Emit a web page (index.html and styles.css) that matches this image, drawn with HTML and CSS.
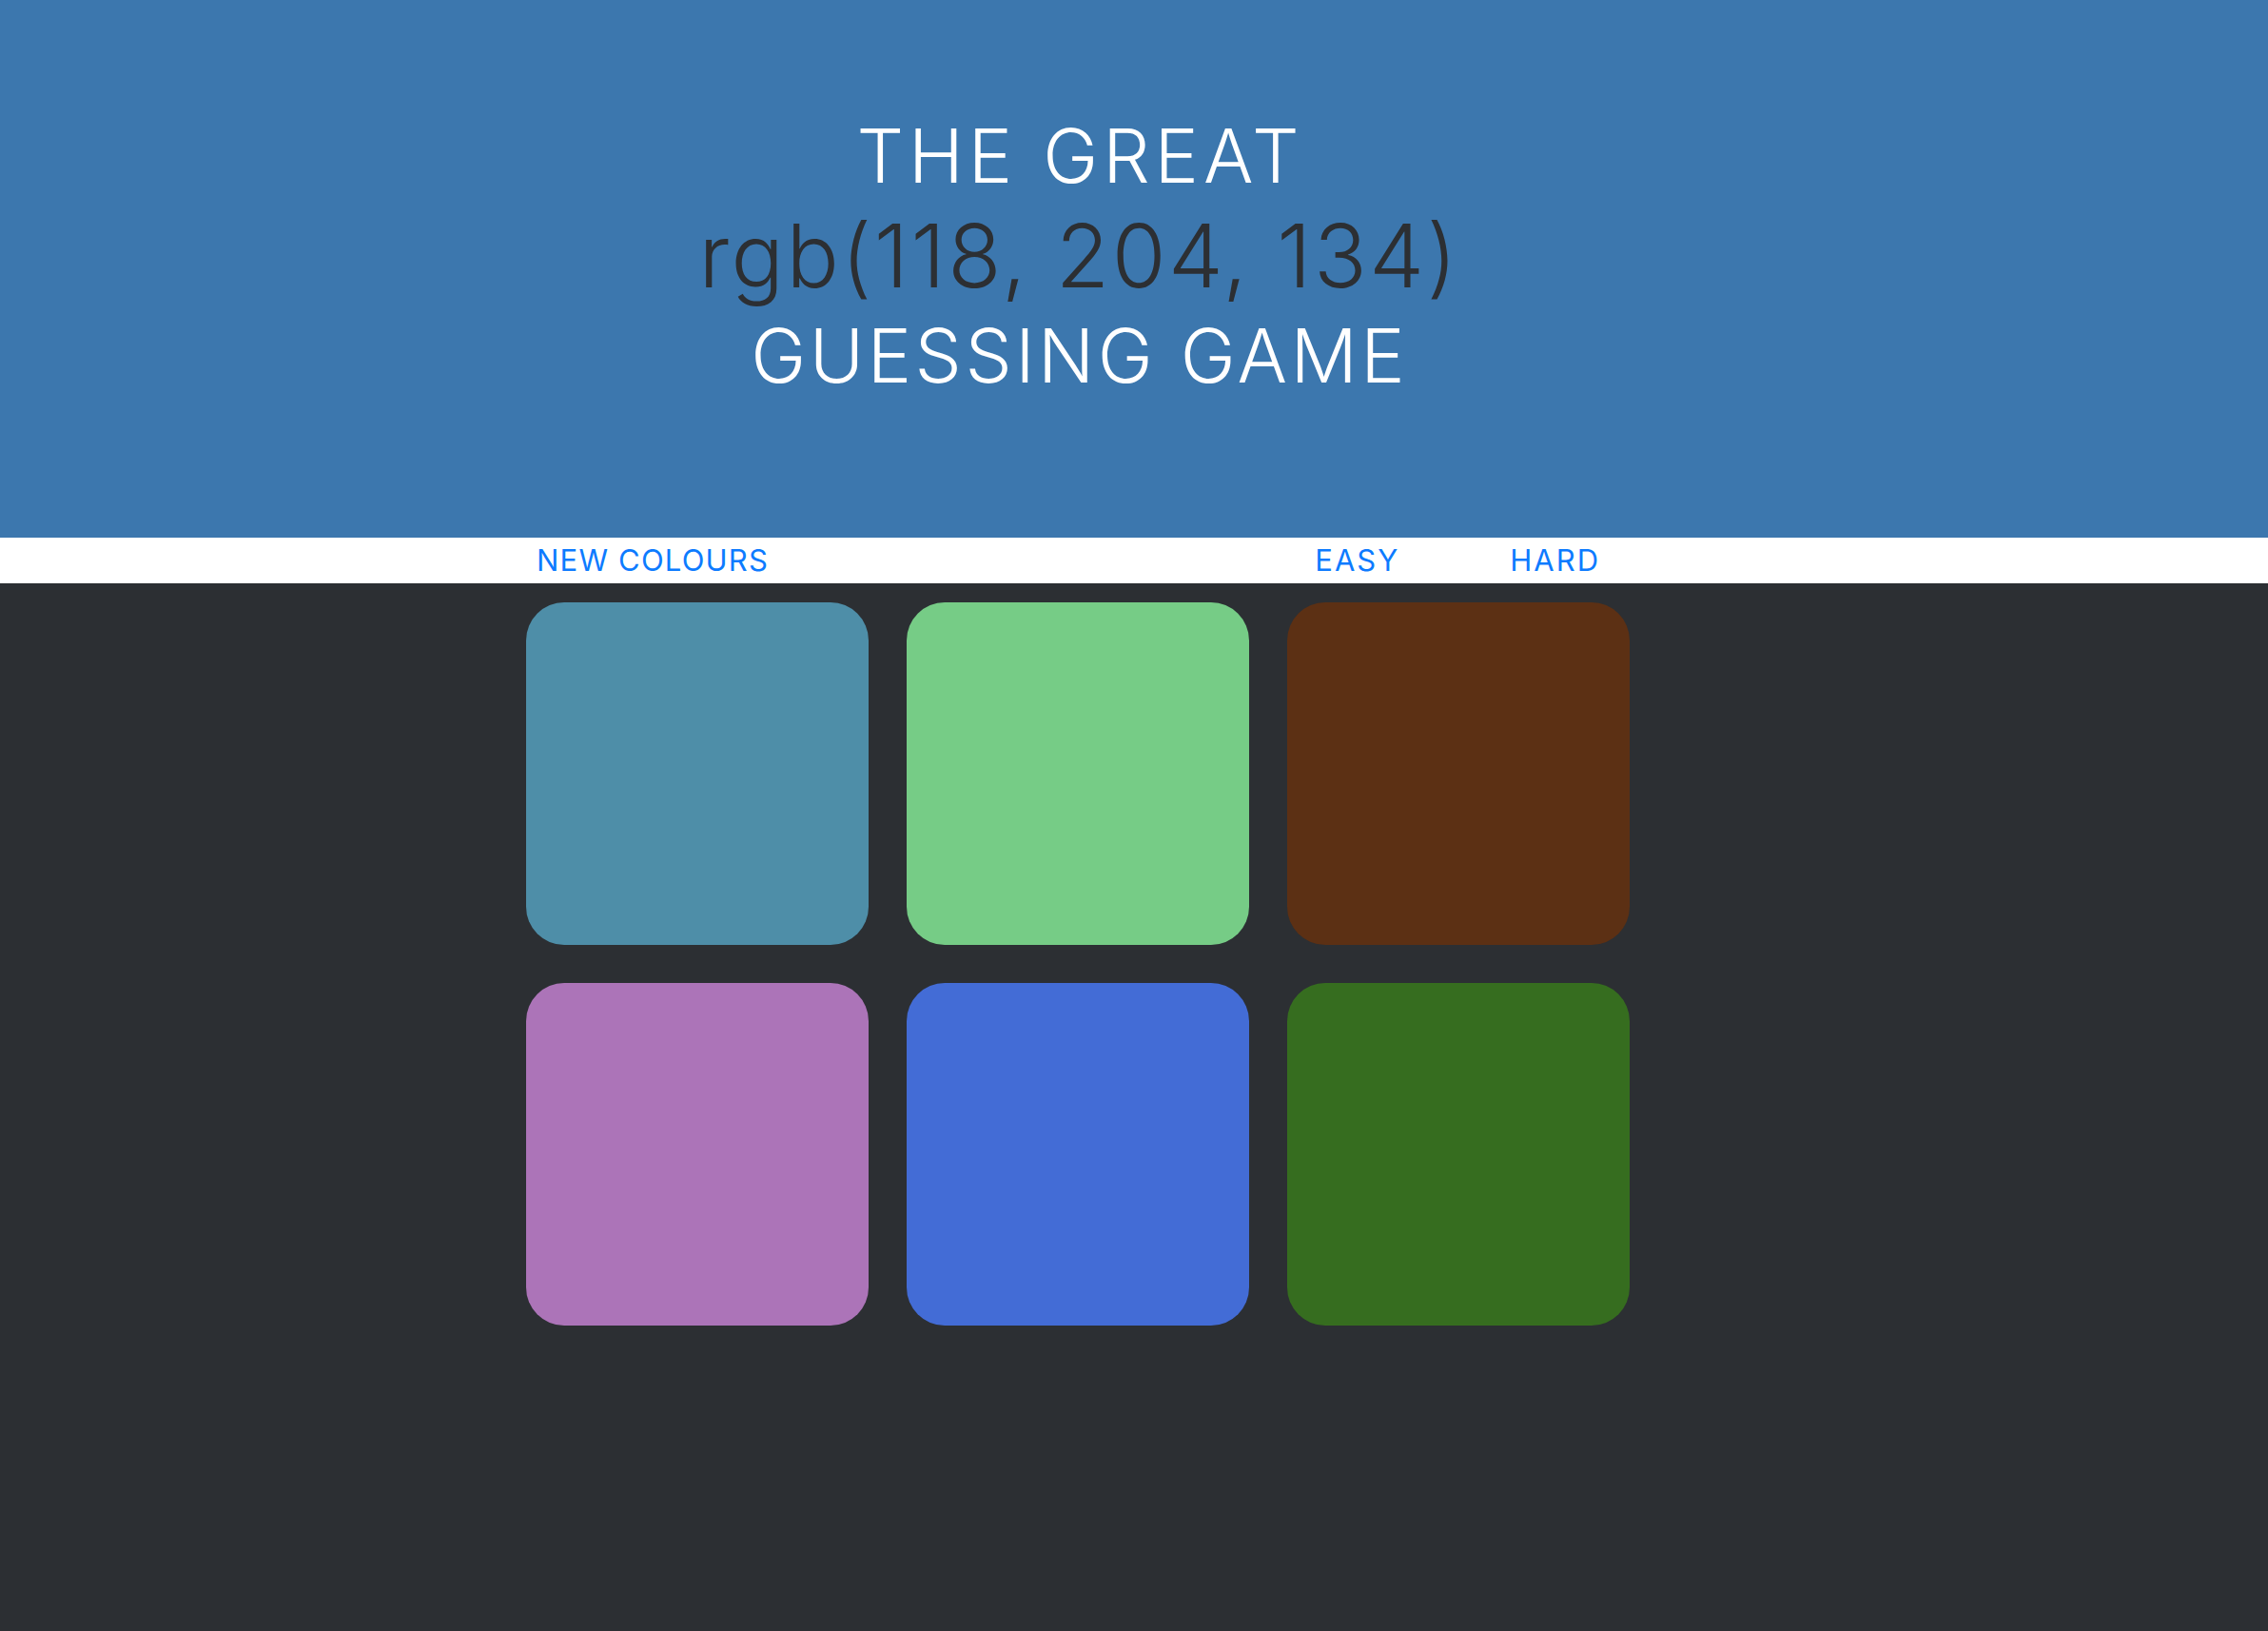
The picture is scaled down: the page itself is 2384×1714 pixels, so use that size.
FILE: index.html
```html
<!DOCTYPE html>
<html lang="en">
<head>
<meta charset="utf-8">
<title>The Great RGB Guessing Game</title>
<link rel="stylesheet" href="styles.css">
</head>
<body>
<div class="page">
  <header class="banner">
    <h1 class="title">
      <span class="title-line title-top">THE GREAT</span>
      <span class="title-rgb">rgb(118, 204, 134)</span>
      <span class="title-line title-bottom">GUESSING GAME</span>
    </h1>
  </header>
  <nav class="bar">
    <div class="bar-inner">
      <button class="bar-btn bar-btn-new">NEW COLOURS</button>
      <span class="bar-message"></span>
      <button class="bar-btn">EASY</button>
      <button class="bar-btn bar-btn-hard">HARD</button>
    </div>
  </nav>
  <main class="board">
    <div class="grid">
      <div class="square sq-1"></div>
      <div class="square sq-2"></div>
      <div class="square sq-3"></div>
      <div class="square sq-4"></div>
      <div class="square sq-5"></div>
      <div class="square sq-6"></div>
    </div>
  </main>
</div>
</body>
</html>
```
FILE: styles.css
```css
html, body {
  margin: 0;
  padding: 0;
  background: #2c2f33;
}
body {
  font-family: Inter, "Noto Sans", "Liberation Sans", sans-serif;
  font-weight: 300;
  min-height: 1714px;
}
.page {
  min-height: 1714px;
}
.banner {
  background: #3c77ae;
  height: 565px;
  box-sizing: border-box;
  padding-top: 112px;
  padding-right: 118px;
}
.title {
  margin: 0;
  font-weight: 300;
  text-align: center;
  display: flex;
  flex-direction: column;
  align-items: center;
}
.title-line {
  color: #ffffff;
  font-size: 78px;
  line-height: 104px;
}
.title-top {
  letter-spacing: 5px;
  padding-left: 5px;
}
.title-bottom {
  letter-spacing: 3.5px;
  padding-left: 3.5px;
}
.title-rgb {
  color: #2c2f33;
  font-size: 92px;
  line-height: 106px;
  letter-spacing: 2.5px;
  padding-left: 2.5px;
}
.bar {
  background: #ffffff;
  height: 48px;
  padding-right: 118px;
}
.bar-inner {
  width: 1198px;
  margin: 0 auto;
  box-sizing: border-box;
  height: 48px;
  display: flex;
  align-items: center;
  padding-left: 30px;
  padding-right: 50px;
}
.bar-btn {
  background: none;
  border: 0;
  padding: 0;
  margin: 0;
  font-family: inherit;
  font-weight: 400;
  font-size: 31px;
  line-height: 48px;
  letter-spacing: 2px;
  color: #0d7bff;
  cursor: pointer;
}
.bar-btn-new {
  letter-spacing: 1.2px;
}
.bar-message {
  flex: 1;
}
.bar-btn-hard {
  margin-left: 116px;
}
.board {
  padding-top: 20px;
  padding-right: 118px;
}
.grid {
  width: 1160px;
  margin: 0 auto;
  display: grid;
  grid-template-columns: repeat(3, 360px);
  grid-auto-rows: 360px;
  gap: 40px;
}
.square {
  border-radius: 40px;
}
.sq-1 { background: #4e8ea8; }
.sq-2 { background: #76cc86; }
.sq-3 { background: #5c3014; }
.sq-4 { background: #ac74b8; }
.sq-5 { background: #436cd6; }
.sq-6 { background: #366d1f; }
```
